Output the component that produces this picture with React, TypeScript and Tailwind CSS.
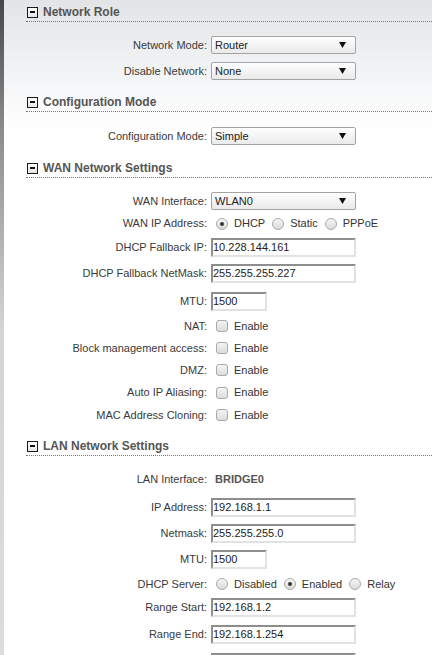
import React from "react";

const font = "font-['Liberation_Sans',Arial,Helvetica,sans-serif]";

function Header({ title, className }: { title: string; className: string }) {
  return (
    <div className={`ml-[22px] flex h-[19px] items-center border-b border-dotted border-[#7a7a7a] ${className}`}>
      <div className="ml-[1px] flex h-[11px] w-[11px] items-center justify-center border border-[#1a1a1a] bg-[linear-gradient(to_bottom,#ffffff,#e4e4e4)]">
        <div className="h-[2px] w-[5px] bg-[#111]" />
      </div>
      <span className="ml-[5px] text-[12px] font-bold text-[#555]">{title}</span>
    </div>
  );
}

function Row({ label, className, children }: { label: string; className: string; children?: React.ReactNode }) {
  return (
    <div className={`flex items-center ${className}`}>
      <div className="w-[203px] text-right text-[11px] text-[#3a3a3a]">{label}</div>
      <div className="ml-[4px] flex items-center">{children}</div>
    </div>
  );
}

function Select({ value }: { value: string }) {
  return (
    <div className="flex h-[18px] w-[145px] items-center justify-between rounded-[2px] border border-[#a3a3a3] bg-[linear-gradient(to_bottom,#fefefe,#eaeaea)] pl-[3px] pr-[9px] text-[11px] text-[#222]">
      <span>{value}</span>
      <svg width="7" height="6" viewBox="0 0 7 6">
        <path d="M0 0 H7 L3.5 6 Z" fill="#111" />
      </svg>
    </div>
  );
}

function Input({ value, className }: { value: string; className: string }) {
  return (
    <div
      className={`flex h-[19px] items-center border-2 border-t-[#8e8e8e] border-l-[#8e8e8e] border-r-[#e2e2e2] border-b-[#e2e2e2] bg-white text-[11px] text-[#222] ${className}`}
    >
      <span>{value}</span>
    </div>
  );
}

function Checkbox() {
  return (
    <div className="ml-[5px] flex items-center">
      <div className="h-[12px] w-[12px] rounded-[3px] border border-[#a9a9a9] bg-[linear-gradient(to_bottom,#f4f4f4,#dcdcdc)]" />
      <span className="ml-[6px] text-[11px] text-[#333]">Enable</span>
    </div>
  );
}

function Radio({ label, checked, first }: { label: string; checked?: boolean; first?: boolean }) {
  return (
    <div className={`flex items-center ${first ? "ml-[5px]" : "ml-[7px]"}`}>
      <div className="flex h-[12px] w-[12px] items-center justify-center rounded-full border border-[#aaaaaa] bg-[linear-gradient(to_bottom,#f6f6f6,#dadada)]">
        {checked ? <div className="h-[4px] w-[4px] rounded-full bg-[#333]" /> : null}
      </div>
      <span className="ml-[6px] text-[11px] text-[#333]">{label}</span>
    </div>
  );
}

export default function App() {
  return (
    <div className={`flex h-[655px] w-[432px] overflow-hidden ${font}`}>
      <div className="w-[4px] shrink-0 bg-[linear-gradient(to_bottom,#474747_0px,#8c8c8c_130px,#d4d4d4_330px,#dcdcdc_655px)]" />
      <div className="flex-1 bg-[linear-gradient(to_bottom,#e2e4e6_0px,#f6f7f8_90px,#ffffff_130px)] pt-[3px]">
        <Header title="Network Role" className="" />
        <Row label="Network Mode:" className="mt-[10px] h-[26px]">
          <Select value="Router" />
        </Row>
        <Row label="Disable Network:" className="h-[26px]">
          <Select value="None" />
        </Row>

        <Header title="Configuration Mode" className="mt-[9px]" />
        <Row label="Configuration Mode:" className="mt-[11px] h-[26px]">
          <Select value="Simple" />
        </Row>

        <Header title="WAN Network Settings" className="mt-[10px]" />
        <Row label="WAN Interface:" className="mt-[12px] h-[22px]">
          <Select value="WLAN0" />
        </Row>
        <Row label="WAN IP Address:" className="h-[23px]">
          <Radio label="DHCP" checked first />
          <Radio label="Static" />
          <Radio label="PPPoE" />
        </Row>
        <Row label="DHCP Fallback IP:" className="h-[24px]">
          <Input value="10.228.144.161" className="w-[145px]" />
        </Row>
        <Row label="DHCP Fallback NetMask:" className="h-[28px]">
          <Input value="255.255.255.227" className="w-[145px]" />
        </Row>
        <Row label="MTU:" className="h-[28px]">
          <Input value="1500" className="w-[56px]" />
        </Row>
        <Row label="NAT:" className="h-[22px]">
          <Checkbox />
        </Row>
        <Row label="Block management access:" className="h-[22px]">
          <Checkbox />
        </Row>
        <Row label="DMZ:" className="h-[22px]">
          <Checkbox />
        </Row>
        <Row label="Auto IP Aliasing:" className="h-[23px]">
          <Checkbox />
        </Row>
        <Row label="MAC Address Cloning:" className="h-[22px]">
          <Checkbox />
        </Row>

        <Header title="LAN Network Settings" className="mt-[11px]" />
        <Row label="LAN Interface:" className="mt-[10px] h-[26px]">
          <span className="ml-[4px] text-[11px] font-bold text-[#555]">BRIDGE0</span>
        </Row>
        <Row label="IP Address:" className="mt-[2px] h-[26px]">
          <Input value="192.168.1.1" className="w-[145px]" />
        </Row>
        <Row label="Netmask:" className="h-[26px]">
          <Input value="255.255.255.0" className="w-[145px]" />
        </Row>
        <Row label="MTU:" className="h-[26px]">
          <Input value="1500" className="w-[56px]" />
        </Row>
        <Row label="DHCP Server:" className="h-[24px]">
          <Radio label="Disabled" first />
          <Radio label="Enabled" checked />
          <Radio label="Relay" />
        </Row>
        <Row label="Range Start:" className="h-[23px]">
          <Input value="192.168.1.2" className="w-[145px]" />
        </Row>
        <Row label="Range End:" className="h-[30px]">
          <Input value="192.168.1.254" className="w-[145px]" />
        </Row>
        <Row label="" className="h-[26px]">
          <Input value="" className="w-[145px]" />
        </Row>
      </div>
    </div>
  );
}
